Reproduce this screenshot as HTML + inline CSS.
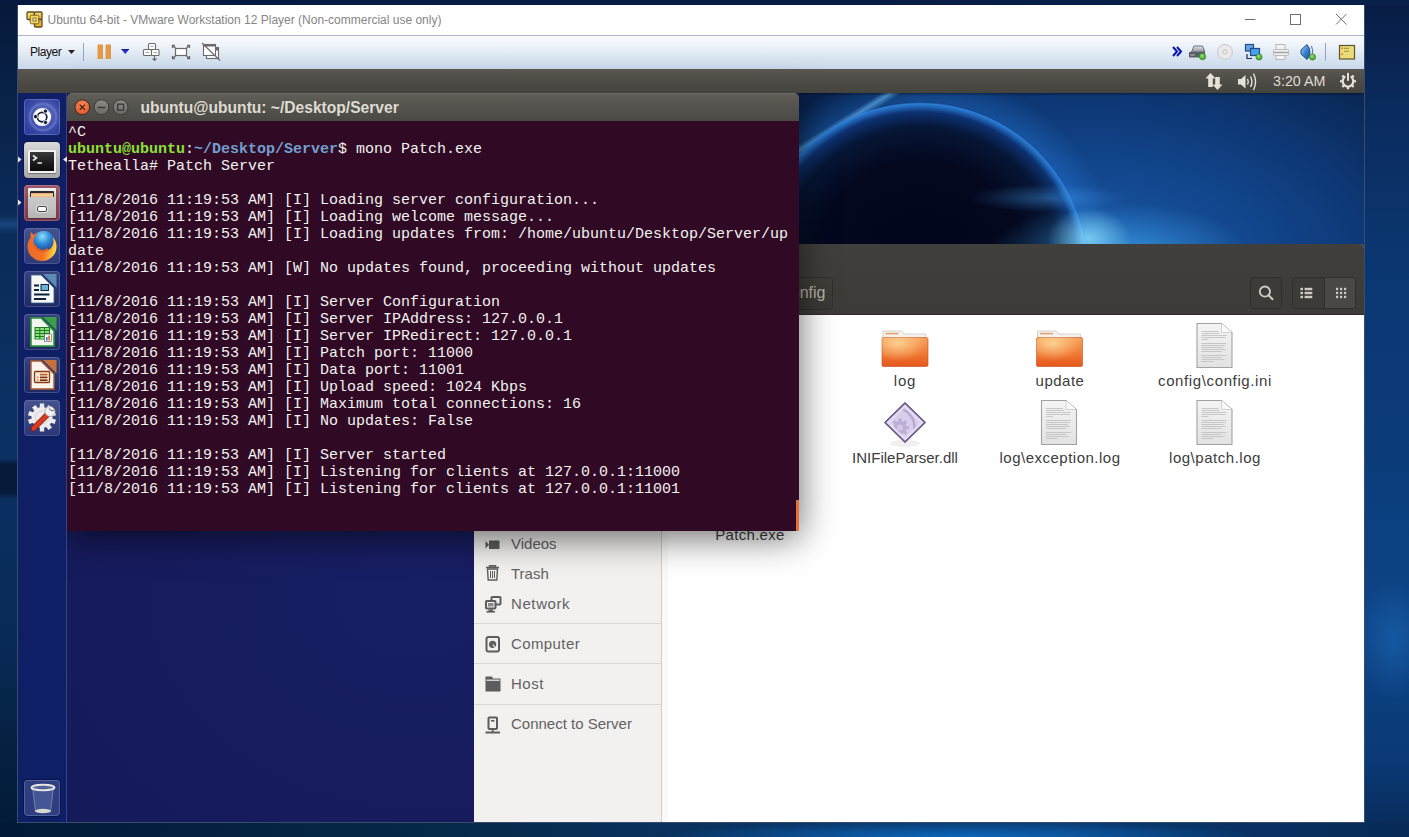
<!DOCTYPE html>
<html><head><meta charset="utf-8">
<style>
*{margin:0;padding:0;box-sizing:border-box}
html,body{width:1409px;height:837px;overflow:hidden}
body{position:relative;font-family:"Liberation Sans",sans-serif;background:#0a3a78}
.a{position:absolute}
#winbg{left:0;top:0;width:1409px;height:837px;background:#0a2d5e}
#wl{left:0;top:0;width:17px;height:837px;background:
 linear-gradient(180deg,rgba(40,100,170,0) 215px,rgba(40,100,170,.45) 224px,rgba(40,100,170,0) 234px),
 linear-gradient(180deg,#06193a 0px,#082248 100px,#0a2b58 220px,#0b3062 400px,#0b3062 458px,#061a3a 465px,#061a3a 492px,#0a2f60 500px,#082a56 640px,#04203f 760px,#021a36 837px)}
#wr{left:1364px;top:0;width:45px;height:837px;background:
 radial-gradient(ellipse 40px 60px at 30px 640px,rgba(30,110,190,.5),rgba(30,110,190,0)),
 linear-gradient(180deg,#071c44 0px,#0a2a5c 100px,#0b3670 250px,#0c3c7a 450px,#0d4486 620px,#0b3a76 760px,#072a56 837px)}
#wb{left:0;top:822px;width:1409px;height:15px;background:
 radial-gradient(ellipse 300px 16px at 960px 15px,rgba(12,110,200,.85),rgba(12,110,200,0)),
 linear-gradient(90deg,#021a38 0%,#062848 30%,#0a3566 55%,#0a3a70 75%,#072a56 100%)}
#frame{left:17px;top:5px;width:1348px;height:818px;border:1px solid #3a4c6c;border-top:none}
#wt{left:0;top:0;width:1409px;height:5px;background:linear-gradient(90deg,#061a40,#071d46 60%,#08204a)}
#vmtitle{left:18px;top:5px;width:1346px;height:30px;background:#fff;}
#vmtitle .t{left:29.5px;top:8px;font-size:12px;color:#858585;white-space:nowrap}
#toolbar{left:18px;top:35px;width:1346px;height:34px;
 background:linear-gradient(180deg,#a6b6ca 0,#a6b6ca 1px,#fafcfe 1px,#eef3f9 30%,#d8e3f0 70%,#c8d8ea 100%);}
#guest{left:18px;top:69px;width:1346px;height:753px;background:#1c1a5e;overflow:hidden}
#panel{left:18px;top:69px;width:1346px;height:24px;
 background:linear-gradient(180deg,#5a5650 0%,#4f4c47 50%,#45433e 100%);}
#launcher{left:18px;top:93px;width:49px;height:729px;background:#0f1f66;
 box-shadow:inset -1px 0 0 #34448a}
.tile{position:absolute;left:6px;width:36px;height:36px;border-radius:4px;overflow:hidden;box-shadow:0 0 0 1px rgba(0,0,20,.35)}
#deskbg{left:67px;top:93px;width:1297px;height:729px;
 background:radial-gradient(ellipse 500px 400px at 350px 500px,#181e64 0%,#161b5e 60%,#151a5a 100%);}
#wall{left:799px;top:93px;width:565px;height:151px;overflow:hidden;
 background:
  linear-gradient(180deg,rgba(0,0,0,.35) 0,rgba(0,0,0,0) 3px),
  radial-gradient(ellipse 42px 30px at 290px 145px,rgba(150,230,255,.7),rgba(150,230,255,0)),
  radial-gradient(ellipse 130px 50px at 320px 160px,rgba(70,180,250,.6),rgba(70,180,250,0)),
  radial-gradient(ellipse 80px 14px at 250px 105px,rgba(70,160,240,.4),rgba(70,160,240,0)),
  radial-gradient(circle 168px at 121px 177px,#02051a 0%,#03081f 65%,#061636 85%,#0d3170 94%,#2a7ed8 99%,rgba(60,160,250,0) 100%),
  radial-gradient(circle 200px at 121px 177px,rgba(40,130,230,0) 0%,rgba(40,130,230,0) 83%,rgba(40,130,230,.3) 84.5%,rgba(30,100,200,0) 100%),
  linear-gradient(148deg,rgba(130,210,255,0) 10.2%,rgba(130,210,255,.6) 11.4%,rgba(130,210,255,0) 12.8%),
  radial-gradient(ellipse 120px 70px at 0px 0px,#08204a 0%,rgba(8,32,74,0) 100%),
  radial-gradient(ellipse 400px 230px at 290px 175px,#1a5aaa 0%,#134890 40%,#0d3672 75%,#0a2856 100%);}
#term{left:67px;top:93px;width:732px;height:438px;background:#300a24;border-radius:5px 5px 0 0;overflow:hidden;
 box-shadow:0 6px 36px rgba(0,0,0,.6)}
#ttitle{left:0;top:0;width:732px;height:28px;background:linear-gradient(180deg,#625f59 0%,#57554f 40%,#4b4944 100%);box-shadow:inset 0 1px 0 rgba(255,255,255,.08)}
#ttext{left:0;top:31px;width:732px;font-family:"Liberation Mono",monospace;font-size:15px;line-height:17px;color:#f2f2f0;white-space:pre;padding-left:1px}
.g{color:#8ae234;font-weight:bold}
.bl{color:#729fcf;font-weight:bold}
#naut{left:474px;top:244px;width:890px;height:578px;background:#fff;border-radius:4px 4px 0 0;overflow:hidden}
#nhead{left:0;top:0;width:890px;height:71px;background:linear-gradient(180deg,#403f3b,#3c3b37);border-bottom:1px solid #2e2d2a}
.btn{border:1px solid #2f2e2b;border-radius:4px;background:#3c3b37}
#nside{left:0;top:71px;width:194px;height:507px;background:#f2f1f0;box-shadow:inset -6px 0 0 #f9f9f8, inset -7px 0 0 #cfcdc9}
.si{position:absolute;left:37px;font-size:15px;color:#626262;white-space:nowrap}
.sep{position:absolute;left:0;width:187px;height:1px;background:#dad8d4}
.lbl{position:absolute;font-size:15px;color:#3c3c3c;white-space:nowrap;text-align:center;width:160px}
</style></head><body>
<div id="winbg" class="a"></div><div id="wl" class="a"></div><div id="wr" class="a"></div><div id="wb" class="a"></div><div id="wt" class="a"></div>
<!-- VMware title bar -->
<div id="vmtitle" class="a">
 <svg class="a" style="left:8px;top:6px" width="17" height="17" viewBox="0 0 17 17">
  <defs><linearGradient id="vmg" x1="0" y1="0" x2="1" y2="1"><stop offset="0" stop-color="#fbe68a"/><stop offset=".6" stop-color="#f3cc4a"/><stop offset="1" stop-color="#f0a010"/></linearGradient></defs>
  <g stroke="#5a4c26" stroke-width="1.3" fill="url(#vmg)">
   <rect x="1" y="1" width="7.5" height="7.5" rx="1"/>
   <rect x="8.5" y="1" width="7.5" height="7.5" rx="1"/>
   <rect x="8.5" y="8.5" width="7.5" height="7.5" rx="1" fill="#f2b02a"/>
  </g>
  <rect x="4.2" y="4.2" width="8.6" height="8.6" rx="1.2" fill="#f6d865" stroke="#6a5a2a" stroke-width=".9"/>
  <rect x="7" y="7" width="3" height="3" fill="#fff8d8" stroke="#6a5a2a" stroke-width=".8"/>
 </svg>
 <div class="t a">Ubuntu 64-bit - VMware Workstation 12 Player (Non-commercial use only)</div>
 <svg class="a" style="left:1220px;top:0" width="126" height="30">
  <path d="M7 14.5 H17.5" stroke="#6f6f6f" stroke-width="1"/>
  <rect x="52.5" y="9.5" width="10" height="10" fill="none" stroke="#6f6f6f" stroke-width="1"/>
  <path d="M98 9 L108.5 19.5 M108.5 9 L98 19.5" stroke="#6f6f6f" stroke-width="1"/>
 </svg>
</div>
<!-- toolbar -->
<div id="toolbar" class="a">
 <div class="a" style="left:12px;top:10px;font-size:12px;color:#111;letter-spacing:-0.45px">Player</div>
 <svg class="a" style="left:0;top:0" width="240" height="34">
  <path d="M50 15 H57 L53.5 19 Z" fill="#222"/>
  <path d="M65.5 8 V26" stroke="#94a3bf" stroke-width="1"/>
  <rect x="79.5" y="9.5" width="5.5" height="14.5" fill="#e09a4a"/>
  <rect x="87.5" y="9.5" width="5.5" height="14.5" fill="#e09a4a"/>
  <path d="M103.5 14.5 H111 L107.25 19 Z" fill="#2730c8"/>
  <path d="M103.5 14.5 H111" stroke="#101880" stroke-width="1"/>
  <!-- keys icon -->
  <g stroke="#6b6b6b" stroke-width="1.1" fill="#fff">
   <rect x="130.5" y="8.5" width="7" height="6" rx="1"/>
   <rect x="125.5" y="14.5" width="8" height="6" rx="1"/>
   <rect x="133.5" y="14.5" width="7.5" height="6" rx="1"/>
  </g>
  <g stroke="#a8a8a8" stroke-width="1"><path d="M132.5 11.5 H135.5 M127.5 17.5 H131 M135.5 17.5 H139"/></g>
  <path d="M136.5 20.5 V25.5 M134.5 23.5 L136.5 25.5 L138.5 23.5" stroke="#6b6b6b" stroke-width="1.1" fill="none"/>
  <!-- fullscreen -->
  <rect x="157.5" y="13.5" width="11" height="7" fill="#fff" stroke="#6b6b6b" stroke-width="1.2"/>
  <g stroke="#6b6b6b" stroke-width="1.3" fill="none">
   <path d="M154.5 13 V10.5 H157 M155 11 L158 13.5"/>
   <path d="M171.5 13 V10.5 H169 M171 11 L168 13.5"/>
   <path d="M154.5 21 V23.5 H157 M155 23 L158 20.5"/>
   <path d="M171.5 21 V23.5 H169 M171 23 L168 20.5"/>
  </g>
  <!-- unity -->
  <rect x="188.5" y="12.5" width="12" height="11" fill="#fff" stroke="#6b6b6b" stroke-width="1.1"/>
  <rect x="185.5" y="9.5" width="12" height="11" fill="#fff" stroke="#6b6b6b" stroke-width="1.1"/>
  <rect x="186" y="9" width="11.5" height="2.5" fill="#6b6b6b"/>
  <rect x="197" y="13" width="3.5" height="2.5" fill="#6b6b6b"/>
  <path d="M184 8 L202 25.5" stroke="#6b6b6b" stroke-width="1.1"/>
 </svg>
 <svg class="a" style="left:1150px;top:0" width="196" height="34">
  <path d="M5 12 L9 16.5 L5 21 M9 12 L13 16.5 L9 21" stroke="#0a14b0" stroke-width="2" fill="none"/>
  <!-- hdd -->
  <defs>
   <linearGradient id="hdg" x1="0" y1="0" x2="0" y2="1"><stop offset="0" stop-color="#e6e9ec"/><stop offset="1" stop-color="#8d9399"/></linearGradient>
   <radialGradient id="grn" cx=".4" cy=".35" r=".7"><stop offset="0" stop-color="#9ae07a"/><stop offset="1" stop-color="#2f9a20"/></radialGradient>
   <linearGradient id="spk" x1="0" y1="0" x2="1" y2="1"><stop offset="0" stop-color="#b8dcf8"/><stop offset=".5" stop-color="#3b86d0"/><stop offset="1" stop-color="#1a4c90"/></linearGradient>
  </defs>
  <path d="M23.5 17 L26 11 H34.5 L37 17 Z" fill="url(#hdg)" stroke="#6a7075" stroke-width="1"/>
  <rect x="21" y="17" width="16" height="5.5" fill="#5a6166"/>
  <rect x="22.5" y="19" width="4" height="2" fill="#8d9399"/>
  <circle cx="34.5" cy="21.5" r="3.2" fill="url(#grn)" stroke="#2a7a1a" stroke-width=".6"/>
  <g transform="translate(-18,0)">
  <!-- cd -->
  <circle cx="75" cy="16.9" r="7.4" fill="#eaeaea" stroke="#c8c8c8" stroke-width="1"/>
  <circle cx="75" cy="16.9" r="2.2" fill="none" stroke="#c4c4c4" stroke-width="1"/>
  <!-- network -->
  <rect x="95.5" y="9.5" width="8" height="6.5" fill="#6ba4de" stroke="#1f4e8a" stroke-width="1.2"/>
  <path d="M97 19 V23.5 H102" stroke="#1a2a50" stroke-width="1.2" fill="none"/>
  <rect x="100.5" y="13.5" width="9" height="7" fill="#4aa2ec" stroke="#1f4e8a" stroke-width="1.2"/>
  <circle cx="109" cy="22" r="3.1" fill="url(#grn)" stroke="#2a7a1a" stroke-width=".6"/>
  <!-- printer -->
  <g stroke="#b9b9b9" stroke-width="1" fill="#f2f2f2">
   <rect x="126" y="9.5" width="9" height="5"/>
   <rect x="123.5" y="14.5" width="15" height="6" rx="1"/>
   <rect x="126" y="20.5" width="9" height="4"/>
  </g>
  <path d="M124 17.5 H138" stroke="#a6a6a6" stroke-width="1.6"/>
  <!-- speaker -->
  <path d="M151 15 L157 9.5 Q160 13 160 17 Q160 21 157 24.5 L151 19 Z" fill="url(#spk)" stroke="#1d4f8d" stroke-width="1"/>
  <path d="M161.5 11 Q164 16 161.5 22" stroke="#4a6a9a" stroke-width="1" fill="none"/>
  <circle cx="162.5" cy="22" r="3.1" fill="url(#grn)" stroke="#2a7a1a" stroke-width=".6"/>
  <path d="M175.5 8 V25.5" stroke="#94a3bf" stroke-width="1"/>
  <!-- note -->
  <rect x="189.5" y="10.5" width="15" height="13.5" fill="#ecdc78" stroke="#5c5530" stroke-width="1.2"/>
  <g fill="#d86a4a"><rect x="191.5" y="12.5" width="1.5" height="1.5"/><rect x="191.5" y="18.5" width="1.5" height="1.5"/></g>
  <path d="M194 13.3 H199 M194 16.3 H199" stroke="#8a7a3a" stroke-width=".8"/>
 </g></svg>
</div>
<div id="guest" class="a"></div><div id="deskbg" class="a"></div><div id="wall" class="a"></div>
<!-- nautilus -->
<div id="naut" class="a">
 <div id="nhead" class="a">
  <div class="a" style="left:200px;top:33px;width:159px;height:33px;border:1px solid #302f2c;border-radius:4px;background:linear-gradient(180deg,#3f3e3a,#3a3935)"></div>
  <div class="a" style="left:200px;top:40px;width:151.5px;text-align:right;font-size:16px;color:#b8b3a8">config</div>
  <div class="a btn" style="left:776px;top:33px;width:32px;height:32px"></div>
  <div class="a btn" style="left:818px;top:33px;width:64px;height:32px"></div>
  <div class="a" style="left:850px;top:34px;width:31px;height:30px;background:#4a4844;border-radius:0 3px 3px 0;border-left:1px solid #2e2d2a"></div>
  <svg class="a" style="left:776px;top:33px" width="106" height="32">
   <circle cx="14.9" cy="14.6" r="5.1" fill="none" stroke="#cfcbc3" stroke-width="1.8"/>
   <path d="M18.6 18.3 L22.5 22.2" stroke="#cfcbc3" stroke-width="2" stroke-linecap="round"/>
   <g fill="#cfcbc3">
    <rect x="50.4" y="10.8" width="2.6" height="2.4"/><rect x="54.6" y="10.8" width="7.7" height="2.4"/>
    <rect x="50.4" y="14.8" width="2.6" height="2.4"/><rect x="54.6" y="14.8" width="7.7" height="2.4"/>
    <rect x="50.4" y="18.8" width="2.6" height="2.4"/><rect x="54.6" y="18.8" width="7.7" height="2.4"/>
    <rect x="86" y="10.8" width="2.2" height="2.3"/><rect x="90" y="10.8" width="2.2" height="2.3"/><rect x="94" y="10.8" width="2.2" height="2.3"/>
    <rect x="86" y="14.8" width="2.2" height="2.3"/><rect x="90" y="14.8" width="2.2" height="2.3"/><rect x="94" y="14.8" width="2.2" height="2.3"/>
    <rect x="86" y="18.8" width="2.2" height="2.3"/><rect x="90" y="18.8" width="2.2" height="2.3"/><rect x="94" y="18.8" width="2.2" height="2.3"/>
   </g>
  </svg>
 </div>
 <div id="nside" class="a">
  <svg class="a" style="left:0;top:0" width="187" height="507">
   <g fill="#5d5d5d">
    <!-- videos icon -->
    <path d="M11.5 226 V233.5 L15 229.75 Z"/><rect x="15" y="225.5" width="10.5" height="8.5"/>
    <!-- trash -->
    <path d="M12 252.5 H25 M15.5 252.5 V250.8 H21.5 V252.5" stroke="#5d5d5d" stroke-width="1.4" fill="none"/>
    <path d="M13.5 254 H23.5 L22.8 265 H14.2 Z" fill="none" stroke="#5d5d5d" stroke-width="1.4"/>
    <path d="M16.5 256 V263 M18.5 256 V263 M20.5 256 V263" stroke="#5d5d5d" stroke-width="1"/>
    <!-- network -->
    <rect x="17.5" y="282" width="9" height="7.5" rx=".8" fill="#f2f1f0" stroke="#5d5d5d" stroke-width="2"/>
    <rect x="12" y="286" width="9.5" height="7.5" rx=".8" fill="#f2f1f0" stroke="#5d5d5d" stroke-width="2"/>
    <rect x="14" y="288" width="5.5" height="3.5" fill="#8a8a8a"/>
    <rect x="14.5" y="294.5" width="4.5" height="1.5"/><rect x="12.5" y="296" width="8.5" height="1.6"/>
    <!-- computer -->
    <rect x="12.5" y="322" width="12.5" height="14.5" rx="2" fill="none" stroke="#5d5d5d" stroke-width="2"/>
    <circle cx="18.6" cy="329.3" r="3.6"/>
    <path d="M18.8 329.5 L21.5 333" stroke="#f2f1f0" stroke-width="1.1"/>
    <!-- host folder -->
    <path d="M11.5 361.5 H18 L19 363.5 H26.5 V376.5 H11.5 Z"/>
    <path d="M12.5 365.2 H25.5" stroke="#f2f1f0" stroke-width="1.2"/>
    <!-- connect -->
    <rect x="14.5" y="402.5" width="8.5" height="11.5" rx=".8" fill="none" stroke="#5d5d5d" stroke-width="2"/>
    <rect x="17" y="405" width="3.5" height="1.6"/>
    <path d="M18.75 414 V417.5 M11.5 417.5 H26" stroke="#5d5d5d" stroke-width="1.8"/>
   </g>
  </svg>
  <div class="si" style="top:220px">Videos</div>
  <div class="si" style="top:250px">Trash</div>
  <div class="si" style="top:280px;letter-spacing:.6px">Network</div>
  <div class="sep" style="top:308px"></div>
  <div class="si" style="top:320px;letter-spacing:.4px">Computer</div>
  <div class="sep" style="top:348px"></div>
  <div class="si" style="top:360px;letter-spacing:.5px">Host</div>
  <div class="sep" style="top:389px"></div>
  <div class="si" style="top:400px">Connect to Server</div>
 </div>
 <!-- content icons -->
 <svg class="a" style="left:0;top:71px" width="890" height="507">
  <defs>
   <linearGradient id="fo" x1="0" y1="0" x2="0" y2="1"><stop offset="0" stop-color="#f7a35a"/><stop offset=".55" stop-color="#f07a35"/><stop offset="1" stop-color="#e5561c"/></linearGradient>
   <radialGradient id="foh" cx=".35" cy=".2" r=".6"><stop offset="0" stop-color="rgba(255,230,170,.7)"/><stop offset="1" stop-color="rgba(255,230,170,0)"/></radialGradient>
   <linearGradient id="doc" x1="0" y1="0" x2="0" y2="1"><stop offset="0" stop-color="#f4f4f4"/><stop offset="1" stop-color="#e2e2e2"/></linearGradient>
   
   
  </defs>
  <g transform="translate(408,15)">
    <path d="M1 1 H19.5 L22 4 H44 V20 H1 Z" fill="#f4f2ee" stroke="#cfcac2" stroke-width=".8"/>
    <rect x="3.5" y="2.8" width="13" height="1.6" fill="#e9a070"/>
    <rect x="0" y="7.5" width="46" height="29" rx="1.5" fill="url(#fo)" stroke="#c9481a" stroke-width=".6"/>
    <rect x="0" y="7.5" width="46" height="29" rx="1.5" fill="url(#foh)"/>
   </g>
  <g transform="translate(562.5,15)">
    <path d="M1 1 H19.5 L22 4 H44 V20 H1 Z" fill="#f4f2ee" stroke="#cfcac2" stroke-width=".8"/>
    <rect x="3.5" y="2.8" width="13" height="1.6" fill="#e9a070"/>
    <rect x="0" y="7.5" width="46" height="29" rx="1.5" fill="url(#fo)" stroke="#c9481a" stroke-width=".6"/>
    <rect x="0" y="7.5" width="46" height="29" rx="1.5" fill="url(#foh)"/>
   </g>
  <g transform="translate(722.5,8)">
    <path d="M0.5 0.5 H25 L35.5 9.5 V44.5 H0.5 Z" fill="url(#doc)" stroke="#a2a2a2" stroke-width="1.1"/>
    <path d="M25 0.5 V9.5 H35.5" fill="#fafafa" stroke="#c8c8c8" stroke-width=".8"/>
    <g stroke="#c2c2c2" stroke-width=".9">
     <path d="M5 8.5 H22 M5 10.5 H23 M5 12.5 H30 M5 14.5 H29 M5 16.5 H12"/>
     <path d="M5 20.5 H30 M5 22.5 H29 M5 24.5 H27 M5 26.5 H29 M5 28.5 H25"/>
     <path d="M5 32.5 H30 M5 34.5 H25 M5 36.5 H28 M5 38.5 H17"/>
    </g>
   </g>
  <g transform="translate(567,85)">
    <path d="M0.5 0.5 H25 L35.5 9.5 V44.5 H0.5 Z" fill="url(#doc)" stroke="#a2a2a2" stroke-width="1.1"/>
    <path d="M25 0.5 V9.5 H35.5" fill="#fafafa" stroke="#c8c8c8" stroke-width=".8"/>
    <g stroke="#c2c2c2" stroke-width=".9">
     <path d="M5 8.5 H22 M5 10.5 H23 M5 12.5 H30 M5 14.5 H29 M5 16.5 H12"/>
     <path d="M5 20.5 H30 M5 22.5 H29 M5 24.5 H27 M5 26.5 H29 M5 28.5 H25"/>
     <path d="M5 32.5 H30 M5 34.5 H25 M5 36.5 H28 M5 38.5 H17"/>
    </g>
   </g>
  <g transform="translate(722.5,85)">
    <path d="M0.5 0.5 H25 L35.5 9.5 V44.5 H0.5 Z" fill="url(#doc)" stroke="#a2a2a2" stroke-width="1.1"/>
    <path d="M25 0.5 V9.5 H35.5" fill="#fafafa" stroke="#c8c8c8" stroke-width=".8"/>
    <g stroke="#c2c2c2" stroke-width=".9">
     <path d="M5 8.5 H22 M5 10.5 H23 M5 12.5 H30 M5 14.5 H29 M5 16.5 H12"/>
     <path d="M5 20.5 H30 M5 22.5 H29 M5 24.5 H27 M5 26.5 H29 M5 28.5 H25"/>
     <path d="M5 32.5 H30 M5 34.5 H25 M5 36.5 H28 M5 38.5 H17"/>
    </g>
   </g>
  <!-- dll -->
  <g transform="translate(431,107.5)">
   <ellipse cx="0" cy="21" rx="15" ry="3.5" fill="rgba(0,0,0,.06)"/>
   <path d="M0 -19.5 L20 0 L0 19.5 L-20 0 Z" fill="#e4dcf0" stroke="#6e5e90" stroke-width="1.4" stroke-linejoin="round"/>
   <path d="M0 -15 L15 0 L0 15 L-15 0 Z" fill="#d8cdea"/>
   <clipPath id="dclip"><path d="M0 -15 L15 0 L0 15 L-15 0 Z"/></clipPath>
   <g clip-path="url(#dclip)"><g transform="translate(-5,5)" fill="#bcaed6">
    <circle r="6.5"/>
    <rect x="-1.6" y="-9" width="3.2" height="18"/><rect x="-9" y="-1.6" width="18" height="3.2"/>
    <rect x="-1.6" y="-9" width="3.2" height="18" transform="rotate(45)"/><rect x="-9" y="-1.6" width="18" height="3.2" transform="rotate(45)"/>
    <circle r="3" fill="#d4c8e6"/>
   </g><path d="M-2 -13 Q12 -6 9 12" stroke="#b8a8d2" stroke-width="2.5" fill="none"/></g>
   <path d="M0 -19.5 L20 0 L0 19.5 L-20 0 Z" fill="none" stroke="#6e5e90" stroke-width="1.4" stroke-linejoin="round"/>
  </g>
 </svg>
 <div class="lbl" style="left:351px;top:128px;letter-spacing:.8px">log</div>
 <div class="lbl" style="left:506px;top:128px;letter-spacing:.5px">update</div>
 <div class="lbl" style="left:661px;top:128px;letter-spacing:.62px">config\config.ini</div>
 <div class="lbl" style="left:351px;top:205px">INIFileParser.dll</div>
 <div class="lbl" style="left:506px;top:205px;letter-spacing:.5px">log\exception.log</div>
 <div class="lbl" style="left:661px;top:205px;letter-spacing:.53px">log\patch.log</div>
 <div class="lbl" style="left:196px;top:282px;letter-spacing:.3px">Patch.exe</div>
</div>
<!-- terminal -->
<div id="term" class="a">
 <div id="ttitle" class="a">
  <svg class="a" style="left:0;top:0" width="80" height="28">
   <defs>
    <radialGradient id="cl" cx=".5" cy=".35" r=".6"><stop offset="0" stop-color="#f98a5a"/><stop offset="1" stop-color="#e85a2a"/></radialGradient>
    <linearGradient id="gb" x1="0" y1="0" x2="0" y2="1"><stop offset="0" stop-color="#8e8c86"/><stop offset="1" stop-color="#6a6964"/></linearGradient>
   </defs>
   <circle cx="15.3" cy="14.2" r="7.4" fill="url(#cl)" stroke="#3a2a22" stroke-width="1"/>
   <path d="M12.7 11.6 L17.9 16.8 M17.9 11.6 L12.7 16.8" stroke="#3a2518" stroke-width="1.3"/>
   <circle cx="34.5" cy="14.2" r="7.4" fill="url(#gb)" stroke="#3a3935" stroke-width="1"/>
   <path d="M30.6 14.6 H38.4" stroke="#3c3b37" stroke-width="1.5"/>
   <circle cx="53.6" cy="14.2" r="7.4" fill="url(#gb)" stroke="#3a3935" stroke-width="1"/>
   <rect x="50.6" y="11.2" width="6" height="6" fill="none" stroke="#3c3b37" stroke-width="1.4"/>
  </svg>
  <div class="a" style="left:73.5px;top:6px;font-weight:bold;font-size:15.6px;color:#dfdbd2;white-space:nowrap">ubuntu@ubuntu: ~/Desktop/Server</div>
 </div>
 <div id="ttext" class="a">^C
<span class="g">ubuntu@ubuntu</span>:<span class="bl">~/Desktop/Server</span>$ mono Patch.exe
Tethealla# Patch Server

[11/8/2016 11:19:53 AM] [I] Loading server configuration...
[11/8/2016 11:19:53 AM] [I] Loading welcome message...
[11/8/2016 11:19:53 AM] [I] Loading updates from: /home/ubuntu/Desktop/Server/up
date
[11/8/2016 11:19:53 AM] [W] No updates found, proceeding without updates

[11/8/2016 11:19:53 AM] [I] Server Configuration
[11/8/2016 11:19:53 AM] [I] Server IPAddress: 127.0.0.1
[11/8/2016 11:19:53 AM] [I] Server IPRedirect: 127.0.0.1
[11/8/2016 11:19:53 AM] [I] Patch port: 11000
[11/8/2016 11:19:53 AM] [I] Data port: 11001
[11/8/2016 11:19:53 AM] [I] Upload speed: 1024 Kbps
[11/8/2016 11:19:53 AM] [I] Maximum total connections: 16
[11/8/2016 11:19:53 AM] [I] No updates: False

[11/8/2016 11:19:53 AM] [I] Server started
[11/8/2016 11:19:53 AM] [I] Listening for clients at 127.0.0.1:11000
[11/8/2016 11:19:53 AM] [I] Listening for clients at 127.0.0.1:11001
</div>
 <div class="a" style="left:729px;top:407px;width:3px;height:31px;background:#e2703a"></div>
</div>
<!-- ubuntu panel -->
<div id="panel" class="a">
 <svg class="a" style="left:0;top:0" width="1346" height="24">
  <g fill="#e6e2da">
   <path d="M1192.5 4 L1197.5 9.5 H1194.8 V18 H1190.2 V9.5 H1187.5 Z"/>
   <path d="M1199.5 21 L1204.5 15.5 H1201.8 V8 H1197.2 V15.5 H1194.5 Z" transform="translate(0,0)"/>
  </g>
  <g fill="#e6e2da">
   <path d="M1220 10 H1223 L1227.5 6 V19.5 L1223 15.5 H1220 Z"/>
  </g>
  <g stroke="#e6e2da" stroke-width="1.4" fill="none">
   <path d="M1229.5 10 Q1231 12.7 1229.5 15.5"/>
   <path d="M1232.5 7.5 Q1235.3 12.7 1232.5 18"/>
   <path d="M1235.5 4.5 Q1239.5 12.7 1235.5 21"/>
  </g>
  <g transform="translate(1330,12.3)">
   <circle r="5.3" fill="none" stroke="#e6e2da" stroke-width="2.2"/>
   <g fill="#e6e2da">
    <rect x="-1.1" y="-8" width="2.2" height="3"/><rect x="-1.1" y="5" width="2.2" height="3"/>
    <rect x="-8" y="-1.1" width="3" height="2.2"/><rect x="5" y="-1.1" width="3" height="2.2"/>
    <rect x="-1.1" y="-8" width="2.2" height="3" transform="rotate(45)"/><rect x="-1.1" y="5" width="2.2" height="3" transform="rotate(45)"/>
    <rect x="-8" y="-1.1" width="3" height="2.2" transform="rotate(45)"/><rect x="5" y="-1.1" width="3" height="2.2" transform="rotate(45)"/>
   </g>
   <rect x="-2.5" y="-9" width="5" height="8" fill="#4a4843"/>
   <rect x="-1" y="-8.5" width="2" height="8" fill="#e6e2da"/>
  </g>
 </svg>
 <div class="a" style="left:1255px;top:4px;font-size:14.3px;color:#dfdbd2;white-space:nowrap">3:20 AM</div>
</div>
<!-- launcher -->
<div id="launcher" class="a">
 <!-- bfb -->
 <div class="tile" style="top:6px;background:radial-gradient(circle at 55% 45%,#7080c8 0%,#4858b0 40%,#3040a0 75%,#2a3a96 100%);box-shadow:inset 0 0 0 1px rgba(200,210,255,.25)">
  <div class="a" style="left:7px;top:6px;width:24px;height:24px;border-radius:50%;box-shadow:0 0 0 2.5px rgba(190,200,250,.22)"></div>
  <svg class="a" style="left:0;top:0" width="36" height="36">
   <circle cx="18.1" cy="18.1" r="9" fill="#fff"/>
   <circle cx="18.1" cy="18.1" r="4.7" fill="none" stroke="#121a3a" stroke-width="1.7"/>
   <g fill="#121a3a" stroke="#fff" stroke-width=".8">
    <circle cx="11.5" cy="17.6" r="2.1"/><circle cx="21.5" cy="12.1" r="2.1"/><circle cx="21.5" cy="23.5" r="2.1"/>
   </g>
  </svg>
 </div>
 <!-- terminal -->
 <div class="tile" style="top:49px;background:linear-gradient(180deg,#dadada,#bcbcbc 50%,#a8a8a8)">
  <div class="a" style="left:4px;top:8px;width:28px;height:23px;background:#f2f2f2;border-radius:1px;box-shadow:0 1px 1px rgba(0,0,0,.35)"></div>
  <div class="a" style="left:6px;top:10px;width:24px;height:19px;background:linear-gradient(180deg,#3a3a3a,#1a1a1a 60%,#0a0a0a)"></div>
  <svg class="a" style="left:0;top:0" width="36" height="36"><path d="M9 13.5 L12.5 16 L9 18.5 M13.5 21 H18" stroke="#eee" stroke-width="1.6" fill="none"/></svg>
 </div>
 <!-- files -->
 <div class="tile" style="top:92px;background:linear-gradient(180deg,#9a5a6a,#7a3a4c);box-shadow:inset 0 0 0 1px rgba(255,210,220,.2)">
  <div class="a" style="left:4px;top:3px;width:28px;height:30px;background:linear-gradient(180deg,#f4f4f4 0,#e6e6e6 4px,#c8c8c8 9px,#c4c4c4 60%,#b4b4b4 100%);border-radius:1px;box-shadow:0 1px 1px rgba(0,0,0,.3)"></div>
  <div class="a" style="left:6px;top:6px;width:24px;height:5.5px;background:#2a2a2a;border-radius:1px"></div>
  <div class="a" style="left:7px;top:8px;width:21.5px;height:4px;background:linear-gradient(180deg,#e89a6a,#f8d8a0 50%,#f0b070)"></div>
  <div class="a" style="left:13px;top:20.5px;width:10px;height:6px;background:#fff;border:1.5px solid #444;border-radius:2px;box-shadow:0 0 0 1px #ddd"></div>
 </div>
 <!-- firefox -->
 <div class="tile" style="top:135px;background:linear-gradient(180deg,#46528e,#2c3878);box-shadow:inset 0 0 0 1px rgba(200,210,255,.18)">
  <svg class="a" style="left:0;top:0" width="36" height="36">
   <defs><radialGradient id="ffb" cx=".45" cy=".25" r=".75"><stop offset="0" stop-color="#8ee0f8"/><stop offset=".45" stop-color="#2f8ad8"/><stop offset="1" stop-color="#173a8a"/></radialGradient>
   <linearGradient id="ffo" x1="0" y1=".3" x2="1" y2=".5"><stop offset="0" stop-color="#ec6a24"/><stop offset=".6" stop-color="#f0702a"/><stop offset=".85" stop-color="#f8b030"/><stop offset="1" stop-color="#ffe050"/></linearGradient></defs>
   <circle cx="19.5" cy="14" r="11" fill="url(#ffb)"/>
   <path fill-rule="evenodd" fill="url(#ffo)" d="M3.5 18.5 A14.5 14.5 0 1 0 32.5 18.5 A14.5 14.5 0 1 0 3.5 18.5 Z M29.5 13.5 A10 10 0 1 0 9.5 13.5 A10 10 0 1 0 29.5 13.5 Z"/>
   <clipPath id="fftop"><rect x="12" y="0" width="24" height="10"/></clipPath>
   <circle cx="19.5" cy="14" r="11" fill="url(#ffb)" clip-path="url(#fftop)"/>
   <path d="M6 9 L7.5 4 L10 8 Z" fill="#f07a30"/>
   <path d="M9.5 16 Q12 22 18 23 Q22 23 24 21" stroke="#e8601e" stroke-width="2.2" fill="none"/>
  </svg>
 </div>
 <!-- writer -->
 <div class="tile" style="top:178px;background:linear-gradient(180deg,#36427e,#1e2a66);box-shadow:inset 0 0 0 1px rgba(200,210,255,.22)">
  <svg class="a" style="left:0;top:0" width="36" height="36">
   <path d="M19 3 H32.5 V16.5 Z" fill="#5a8cb4"/>
   <path d="M7 4 H17 L30 17 V32 H7 Z" fill="#f4f6f8" stroke="#3a5a80" stroke-width=".8"/>
   <g fill="#0c2238"><rect x="10" y="13.5" width="5" height="2"/><rect x="10" y="18" width="5" height="2"/><rect x="10" y="22.5" width="15.5" height="2"/><rect x="10" y="27" width="12" height="2"/></g>
   <rect x="16.5" y="13" width="8.5" height="7" fill="#0c2238"/><rect x="17.5" y="14" width="6.5" height="5" fill="#6ab0d8"/>
  </svg>
 </div>
 <!-- calc -->
 <div class="tile" style="top:221px;background:linear-gradient(180deg,#36427e,#1e2a66);box-shadow:inset 0 0 0 1px rgba(200,210,255,.22)">
  <svg class="a" style="left:0;top:0" width="36" height="36">
   <path d="M19 3 H32.5 V16.5 Z" fill="#3aa048"/>
   <path d="M7 4 H17 L30 17 V32 H7 Z" fill="#f2f6f0" stroke="#2a9a30" stroke-width="1.6"/>
   <rect x="10.5" y="13" width="15.5" height="12.5" fill="#1a7a20"/>
   <g fill="#8ee07a">
    <rect x="11.5" y="14" width="3.8" height="2"/><rect x="16.3" y="14" width="3.8" height="2"/><rect x="21.1" y="14" width="3.9" height="2"/>
    <rect x="11.5" y="17" width="3.8" height="2"/><rect x="16.3" y="17" width="3.8" height="2"/><rect x="21.1" y="17" width="3.9" height="2"/>
    <rect x="11.5" y="20" width="3.8" height="2"/><rect x="16.3" y="20" width="3.8" height="2"/>
    <rect x="11.5" y="23" width="3.8" height="1.8"/><rect x="16.3" y="23" width="3.8" height="1.8"/>
   </g>
   <rect x="20.5" y="20" width="7" height="7.5" fill="#fff" stroke="#555" stroke-width=".6"/>
   <rect x="22" y="23" width="1.6" height="3.5" fill="#2a7ad0"/><rect x="24.3" y="21.5" width="1.6" height="5" fill="#e8602a"/>
  </svg>
 </div>
 <!-- impress -->
 <div class="tile" style="top:264px;background:linear-gradient(180deg,#36427e,#1e2a66);box-shadow:inset 0 0 0 1px rgba(200,210,255,.22)">
  <svg class="a" style="left:0;top:0" width="36" height="36">
   <path d="M19 3 H32.5 V16.5 Z" fill="#c8703a"/>
   <path d="M7 4 H17 L30 17 V32 H7 Z" fill="#faf4ee" stroke="#a85a30" stroke-width="1.4"/>
   <rect x="10.5" y="14.5" width="15" height="11" rx="1" fill="#f8e8d8" stroke="#8a3a10" stroke-width="1.3"/>
   <g fill="#c05a20"><rect x="16" y="16.8" width="7.5" height="1.6"/></g>
   <g fill="#7a2a08"><rect x="16" y="19.6" width="7.5" height="1.6"/><rect x="16" y="22.4" width="7.5" height="1.6"/></g>
   <g fill="#d89060"><rect x="12.7" y="19.6" width="1.8" height="1.6"/><rect x="12.7" y="22.4" width="1.8" height="1.6"/></g>
  </svg>
 </div>
 <!-- settings -->
 <div class="tile" style="top:307px;background:linear-gradient(180deg,#46528e,#2a3676);box-shadow:inset 0 0 0 1px rgba(200,210,255,.18)">
  <svg class="a" style="left:0;top:0" width="36" height="36">
   <g transform="translate(18,17.5)" fill="#ececec">
    <circle r="10.5"/><rect x="-2.2" y="-14" width="4.4" height="6" transform="rotate(0)"/><rect x="-2.2" y="-14" width="4.4" height="6" transform="rotate(36)"/><rect x="-2.2" y="-14" width="4.4" height="6" transform="rotate(72)"/><rect x="-2.2" y="-14" width="4.4" height="6" transform="rotate(108)"/><rect x="-2.2" y="-14" width="4.4" height="6" transform="rotate(144)"/><rect x="-2.2" y="-14" width="4.4" height="6" transform="rotate(180)"/><rect x="-2.2" y="-14" width="4.4" height="6" transform="rotate(216)"/><rect x="-2.2" y="-14" width="4.4" height="6" transform="rotate(252)"/><rect x="-2.2" y="-14" width="4.4" height="6" transform="rotate(288)"/><rect x="-2.2" y="-14" width="4.4" height="6" transform="rotate(324)"/>
    <circle r="6.5" fill="none" stroke="#d4d4d4" stroke-width="1"/>
   </g>
   <path d="M9.5 28.5 L23 15" stroke="#8a1a10" stroke-width="5.6" stroke-linecap="round"/>
   <path d="M9.5 28.5 L23 15" stroke="#d83a22" stroke-width="4.2" stroke-linecap="round"/>
   <circle cx="26" cy="11.5" r="5" fill="#f2f2f2" stroke="#9a9a9a" stroke-width=".6"/>
   <path d="M25 8.5 Q27.5 12 30 10" stroke="#777" stroke-width="1.1" fill="none"/>
  </svg>
 </div>
 <!-- trash -->
 <div class="tile" style="top:687px;background:rgba(130,145,200,.28);border:1px solid rgba(170,185,230,.3)">
  <svg class="a" style="left:0;top:0" width="36" height="36">
   <path d="M7.5 6 L10.5 31 H25.5 L28.5 6 Z" fill="rgba(90,105,170,.55)" stroke="rgba(220,225,240,.45)" stroke-width=".8"/>
   <ellipse cx="18" cy="6.5" rx="11.5" ry="2.8" fill="none" stroke="#e8e8e0" stroke-width="2"/>
   <ellipse cx="18" cy="30" rx="8" ry="2.2" fill="#d8d8cc"/>
  </svg>
 </div>
 <!-- arrows -->
 <svg class="a" style="left:0;top:0" width="49" height="729">
  <path d="M0 63.5 L3.5 66.5 L0 69.5 Z M49 63.5 L45 66.5 L49 69.5 Z M0 106.5 L3.5 109.5 L0 112.5 Z" fill="#e8e8e8"/>
 </svg>
</div>
<div id="frame" class="a"></div>
</body></html>
